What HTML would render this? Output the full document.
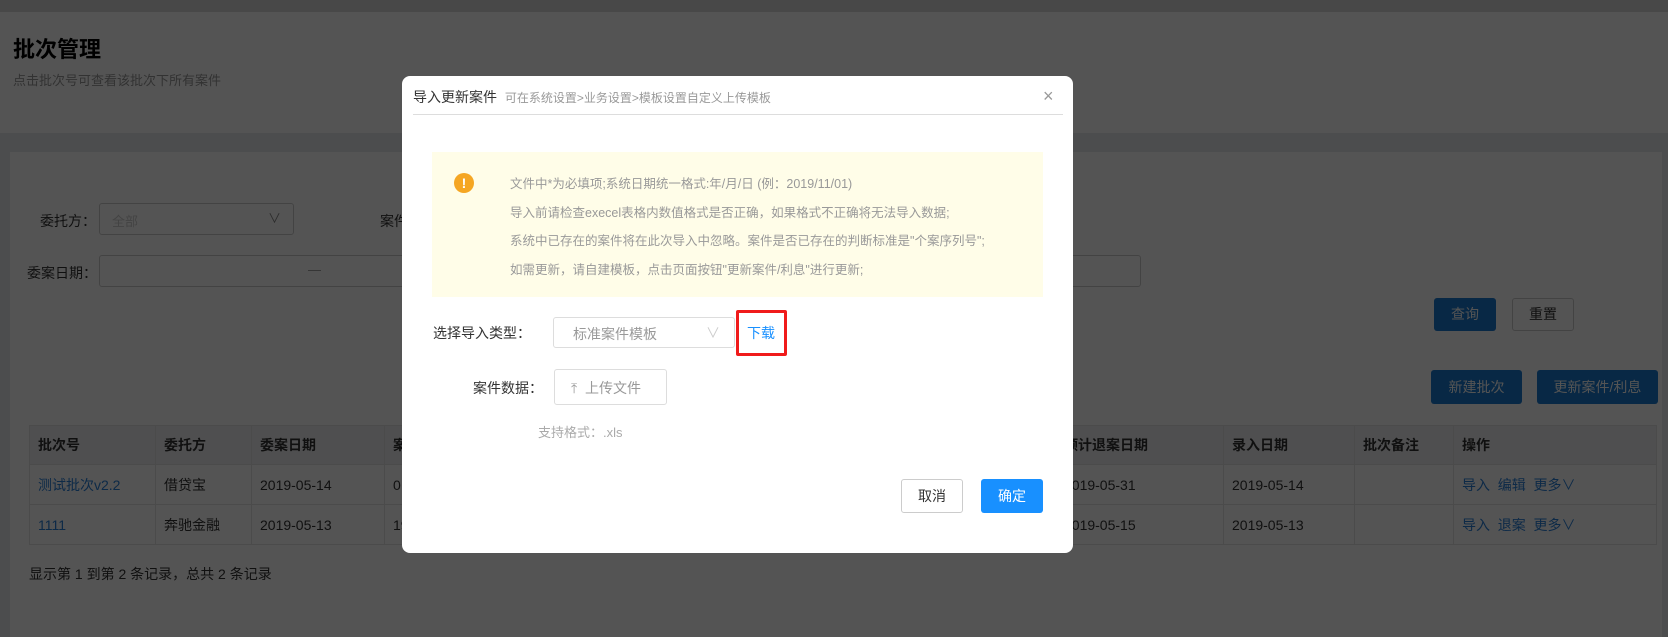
<!DOCTYPE html>
<html><head><meta charset="utf-8"><style>
*{margin:0;padding:0;box-sizing:border-box}
body{width:1668px;height:637px;overflow:hidden;position:relative;background:#e6e8eb;font-family:"Liberation Sans","Noto Sans CJK SC",sans-serif;color:#333}
.a{position:absolute;white-space:nowrap}
.ov{position:absolute;left:0;top:0;width:1668px;height:637px;background:rgba(0,0,0,.67)}
.btn{position:absolute;border-radius:3px;font-size:14px;text-align:center}
.pb{background:#1a7ad0;color:#fff}
.wb{background:#fff;border:1px solid #ccc;color:#333}
table{border-collapse:collapse;position:absolute;left:29px;top:425px;width:1628px;font-size:14px;background:#fff;table-layout:fixed}
td,th{border:1px solid #e2e2e2;height:40px;padding-left:8px;text-align:left;overflow:hidden}
th{background:#eef0f3;font-weight:bold;height:39px}
.lk{color:#2a7fd8}
</style></head><body>
<div class="a" style="left:0;top:0;width:1668px;height:12px;background:#d9d9d9"></div>
<div class="a" style="left:0;top:12px;width:1668px;height:121px;background:#fff"></div>
<div class="a" style="left:13px;top:32px;font-size:22px;font-weight:bold;color:#000">批次管理</div>
<div class="a" style="left:13px;top:70px;font-size:13px;color:#999">点击批次号可查看该批次下所有案件</div>
<div class="a" style="left:10px;top:152px;width:1652px;height:485px;background:#fff"></div>
<div class="a" style="left:40px;top:211px;font-size:14px">委托方：</div>
<div class="a" style="left:99px;top:203px;width:195px;height:32px;border:1px solid #ccc;border-radius:3px;font-size:13px;color:#ccc;padding:7px 12px">全部<span style="position:absolute;right:12px;top:4px;color:#888">∨</span></div>
<div class="a" style="left:380px;top:211px;font-size:14px">案件</div>
<div class="a" style="left:27px;top:263px;font-size:14px">委案日期：</div>
<div class="a" style="left:99px;top:255px;width:1042px;height:32px;border:1px solid #ccc;border-radius:3px"></div>
<div class="a" style="left:308px;top:262px;font-size:13px;color:#999">—</div>
<div class="btn pb" style="left:1434px;top:298px;width:62px;height:33px;line-height:33px">查询</div>
<div class="btn wb" style="left:1512px;top:298px;width:62px;height:33px;line-height:31px">重置</div>
<div class="btn pb" style="left:1431px;top:370px;width:91px;height:34px;line-height:34px">新建批次</div>
<div class="btn pb" style="left:1537px;top:370px;width:121px;height:34px;line-height:34px">更新案件/利息</div>
<table>
<tr><th style="width:126px">批次号</th><th style="width:96px">委托方</th><th style="width:133px">委案日期</th><th style="width:671px">案</th><th style="width:168px">预计退案日期</th><th style="width:131px">录入日期</th><th style="width:99px">批次备注</th><th>操作</th></tr>
<tr><td class="lk">测试批次v2.2</td><td>借贷宝</td><td>2019-05-14</td><td>0</td><td>2019-05-31</td><td>2019-05-14</td><td></td><td class="lk">导入 &nbsp;编辑 &nbsp;更多∨</td></tr>
<tr><td class="lk">1111</td><td>奔驰金融</td><td>2019-05-13</td><td>19</td><td>2019-05-15</td><td>2019-05-13</td><td></td><td class="lk">导入 &nbsp;退案 &nbsp;更多∨</td></tr>
</table>
<div class="a" style="left:29px;top:564px;font-size:14px">显示第 1 到第 2 条记录，总共 2 条记录</div>
<div class="ov"></div>

<div class="a" style="left:402px;top:76px;width:671px;height:477px;background:#fff;border-radius:8px">
<div class="a" style="left:11px;top:11px;font-size:14px;color:#333">导入更新案件 <span style="font-size:12px;color:#999;margin-left:4px">可在系统设置&gt;业务设置&gt;模板设置自定义上传模板</span></div>
<div class="a" style="left:641px;top:10px;font-size:18px;color:#999">×</div>
<div class="a" style="left:11px;top:38px;width:650px;height:1px;background:#ddd"></div>
<div class="a" style="left:30px;top:76px;width:611px;height:145px;background:#fffde8"></div>
<div class="a" style="left:52px;top:97px;width:20px;height:20px;border-radius:50%;background:#f5a623;color:#fff;font-size:14px;text-align:center;line-height:20px;font-weight:bold">!</div>
<div class="a" style="left:108px;top:94px;font-size:12.5px;color:#999;line-height:28.7px">文件中*为必填项;系统日期统一格式:年/月/日 (例：2019/11/01)<br>导入前请检查execel表格内数值格式是否正确，如果格式不正确将无法导入数据;<br>系统中已存在的案件将在此次导入中忽略。案件是否已存在的判断标准是"个案序列号";<br>如需更新，请自建模板，点击页面按钮"更新案件/利息"进行更新;</div>
<div class="a" style="left:31px;top:247px;font-size:14px">选择导入类型：</div>
<div class="a" style="left:151px;top:241px;width:182px;height:31px;border:1px solid #ddd;border-radius:3px;font-size:14px;color:#999;padding:6px 19px">标准案件模板<span style="position:absolute;right:14px;top:5px;color:#ccc">∨</span></div>
<div class="a" style="left:334px;top:234px;width:51px;height:46px;border:3px solid #f01b1b;border-radius:2px"></div>
<div class="a" style="left:345px;top:247px;font-size:14px;color:#1890ff">下载</div>
<div class="a" style="left:71px;top:302px;font-size:14px">案件数据：</div>
<div class="a" style="left:152px;top:293px;width:113px;height:36px;border:1px solid #ddd;border-radius:3px;font-size:14px;color:#999;padding:8px 0 0 16px">⤒ &nbsp;上传文件</div>
<div class="a" style="left:136px;top:346px;font-size:13px;color:#aaa">支持格式：.xls</div>
<div class="btn wb" style="left:499px;top:403px;width:62px;height:34px;line-height:32px;border-color:#ccc">取消</div>
<div class="btn" style="left:579px;top:403px;width:62px;height:34px;line-height:34px;background:#1890ff;color:#fff">确定</div>
</div>
</body></html>
